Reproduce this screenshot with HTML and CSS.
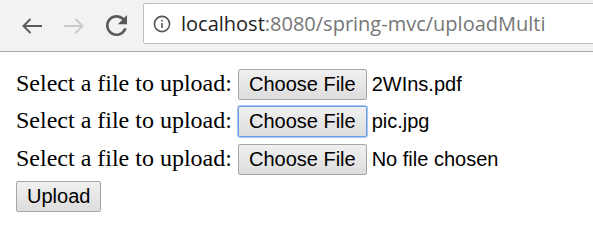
FILE: index.html
```html
<!DOCTYPE html>
<html>
<head>
<meta charset="utf-8">
<link rel="stylesheet" href="styles.css">
</head>
<body>
<div class="toolbar">
  <span class="nav-btn back">
    <svg width="22" height="18" viewBox="0 0 22 18"><path d="M21 9H2.5M9.5 2 2.5 9l7 7" fill="none" stroke="#5a5a5a" stroke-width="2"/></svg>
  </span>
  <span class="nav-btn fwd">
    <svg width="22" height="18" viewBox="0 0 22 18"><path d="M1 9h18.5M12.5 2l7 7-7 7" fill="none" stroke="#c9c9c9" stroke-width="2"/></svg>
  </span>
  <span class="nav-btn reload">
    <svg width="21" height="21" viewBox="4 4 16 16"><path fill="#5a5a5a" d="M17.65 6.35C16.2 4.9 14.21 4 12 4c-4.42 0-7.99 3.58-7.99 8s3.57 8 7.99 8c3.73 0 6.84-2.55 7.73-6h-2.08c-0.82 2.33-3.04 4-5.65 4-3.31 0-6-2.69-6-6s2.69-6 6-6c1.66 0 3.14 0.69 4.22 1.78L13 11h7V4l-2.35 2.35z"/></svg>
  </span>
  <div class="omnibox">
    <svg class="info" width="18" height="18" viewBox="0 0 18 18"><circle cx="9" cy="9" r="7.6" fill="none" stroke="#555" stroke-width="1.6"/><rect x="8.2" y="8" width="1.6" height="5" fill="#555"/><rect x="8.2" y="4.9" width="1.6" height="1.7" fill="#555"/></svg>
    <span class="url"><span class="host">localhost</span>:8080/spring-mvc/uploadMulti</span>
  </div>
</div>
<form class="content">
  <div class="row"><span class="label">Select a file to upload:</span><span class="btn">Choose File</span><span class="fname">2WIns.pdf</span></div>
  <div class="row"><span class="label">Select a file to upload:</span><span class="btn focused">Choose File</span><span class="fname">pic.jpg</span></div>
  <div class="row"><span class="label">Select a file to upload:</span><span class="btn">Choose File</span><span class="fname">No file chosen</span></div>
  <div class="row"><span class="btn">Upload</span></div>
</form>
</body>
</html>
```
FILE: styles.css
```css
html, body {
  margin: 0;
  padding: 0;
  background: #fff;
}
.toolbar {
  height: 51px;
  background: #f2f2f2;
  border-bottom: 1px solid #a9a9a9;
  display: flex;
  align-items: flex-start;
  overflow: hidden;
}
.nav-btn {
  display: flex;
  align-items: center;
  justify-content: center;
  height: 51px;
}
.back { width: 22px; margin-left: 21px; }
.fwd { width: 22px; margin-left: 20px; }
.reload { width: 21px; margin-left: 21px; }
.omnibox {
  margin-left: 16px;
  margin-top: 3px;
  height: 39px;
  flex: 0 0 520px;
  background: #fff;
  border: 1px solid #bfbfbf;
  border-radius: 2px;
  display: flex;
  align-items: center;
}
.info { margin-left: 9px; flex: none; }
.url {
  margin-left: 10px;
  font-family: "Open Sans", "Noto Sans", sans-serif;
  font-size: 20px;
  color: #767676;
  white-space: nowrap;
}
.host { color: #222; }
.content {
  padding: 17px 0 0 16px;
  display: flex;
  flex-direction: column;
  align-items: flex-start;
  gap: 6.33px;
}
.row {
  display: flex;
  align-items: baseline;
  height: 31px;
}
.label {
  font-family: "Liberation Serif", "Times New Roman", serif;
  font-size: 24px;
  color: #000;
  margin-right: 6px;
}
.btn {
  font-family: "Liberation Sans", Arial, sans-serif;
  font-size: 20px;
  line-height: 23px;
  padding: 3px 10px;
  border: 1px solid #a6a6a6;
  border-radius: 2px;
  background: linear-gradient(#f0f0f0, #dddddd);
  color: #000;
  white-space: nowrap;
}
.btn.focused {
  border-color: #6b9ee6;
  box-shadow: 0 0 0 1px rgba(107, 158, 230, 0.6);
}
.fname {
  font-family: "Liberation Sans", Arial, sans-serif;
  font-size: 20px;
  color: #000;
  margin-left: 5px;
}
```
